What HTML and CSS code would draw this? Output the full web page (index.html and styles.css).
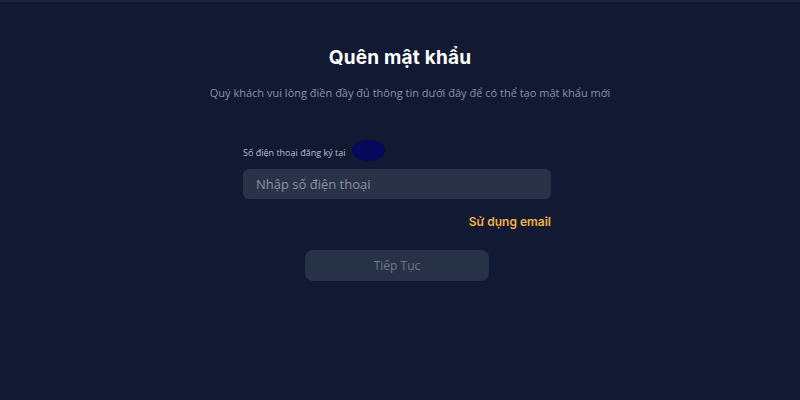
FILE: index.html
```html
<!doctype html>
<html lang="vi">
  <head>
    <meta charset="UTF-8" />
    <meta name="viewport" content="width=device-width, initial-scale=1.0" />
    <title>Quên mật khẩu</title>
    <link rel="stylesheet" href="styles.css">
  </head>
  <body>
    <div class="container">
      <h1>Quên mật khẩu</h1>
      <p class="subtitle">Quý khách vui lòng điền đầy đủ thông tin dưới đây để có thể tạo mật khẩu mới</p>

      <form class="form">
        <label class="label" for="phone">Số điện thoại đăng ký tại<span class="mask"></span></label>
        <input id="phone" class="input" type="tel" placeholder="Nhập số điện thoại" />
        <div class="switch-row">
          <a class="switch-link" href="#">Sử dụng email</a>
        </div>
        <button class="submit" type="button">Tiếp Tục</button>
      </form>
    </div>
  </body>
</html>
```

FILE: styles.css
```css
body {
  font-family: "Open Sans", "Noto Sans", sans-serif;
  margin: 0;
  background: #111a32;
  min-height: 100vh;
  border-top: 2px solid #1b2439;
  box-sizing: border-box;
}
.container {
  display: flex;
  flex-direction: column;
  align-items: center;
  padding-top: 44px;
}
h1 {
  color: #ffffff;
  font-family: Inter, sans-serif;
  font-size: 19px;
  font-weight: 700;
  margin: 0;
  letter-spacing: 0.2px;
}
.subtitle {
  color: #8a92a6;
  font-size: 11px;
  margin: 16px 0 0;
  padding-left: 20px;
}
.form {
  width: 308px;
  margin: 46px 6px 0 0;
  display: flex;
  flex-direction: column;
}
.label {
  color: #b8bfce;
  font-size: 9px;
  margin-bottom: 10px;
  position: relative;
}
.mask {
  position: absolute;
  left: 109px;
  top: -6px;
  width: 33px;
  height: 21px;
  border-radius: 50% 45% 50% 55%;
  background: #08085c;
}
.input {
  height: 30px;
  border: none;
  border-radius: 6px;
  background: #293246;
  padding: 0 13px;
  color: #ffffff;
  font-family: inherit;
  font-size: 13px;
  outline: none;
}
.input::placeholder {
  color: #8b92a3;
}
.switch-row {
  display: flex;
  justify-content: flex-end;
  margin-top: 15px;
}
.switch-link {
  color: #f0b440;
  font-family: Inter, sans-serif;
  font-size: 12px;
  font-weight: 600;
  text-decoration: none;
}
.submit {
  align-self: center;
  width: 184px;
  height: 31px;
  margin-top: 21px;
  border: none;
  border-radius: 8px;
  background: #283246;
  color: #6e7689;
  font-family: inherit;
  font-size: 12px;
  cursor: pointer;
}
```
